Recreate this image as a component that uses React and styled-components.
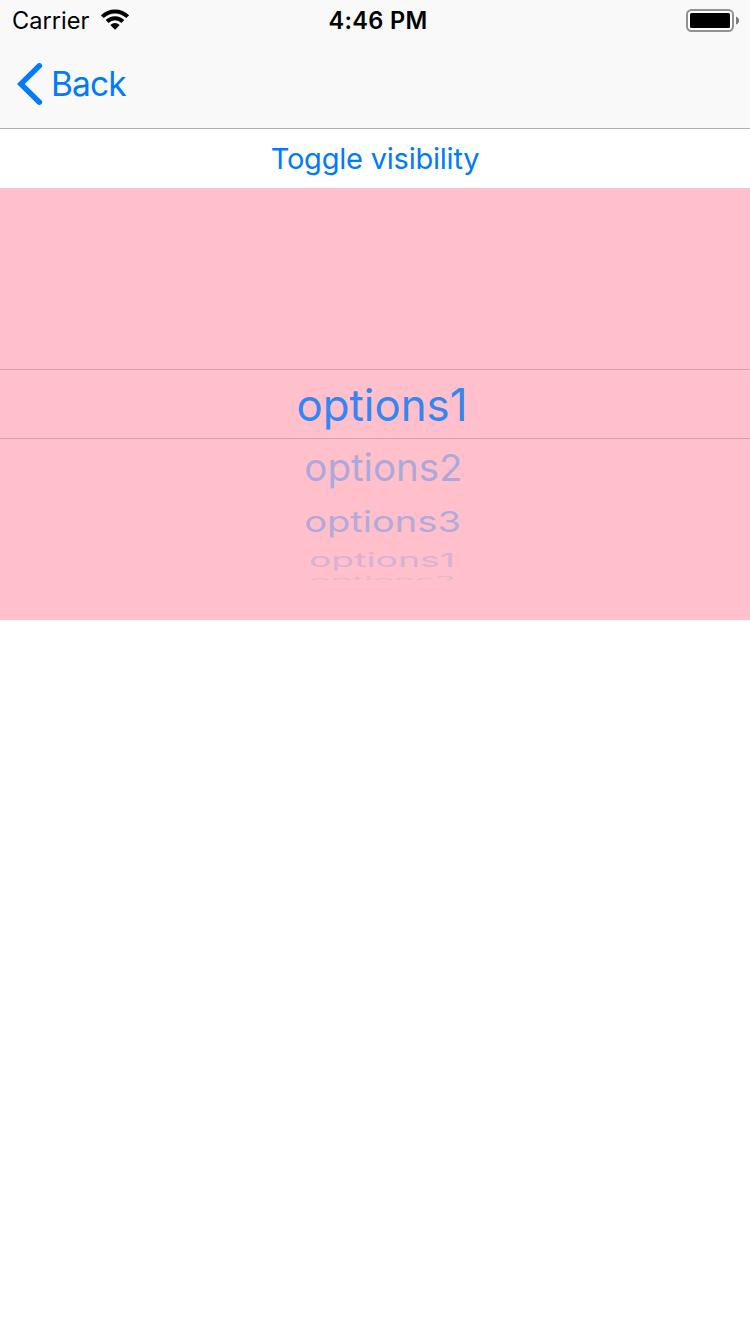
import React from "react";
import styled, { createGlobalStyle } from "styled-components";

const Global = createGlobalStyle`
  * { box-sizing: border-box; }
  body { margin: 0; background: #fff; font-family: Inter, "Liberation Sans", sans-serif; }
`;

const Screen = styled.main`
  display: flex;
  flex-direction: column;
  height: 1334px;
  overflow: hidden;
  background: #fff;
`;

const Header = styled.header`
  height: 129px;
  background: #f9f9f9;
  border-bottom: 1px solid #b0b0b0;
`;

const StatusBar = styled.div`
  display: grid;
  grid-template-columns: 1fr auto 1fr;
  align-items: center;
  height: 42px;
  padding: 0 11px 0 12px;
  color: #000;
`;

const Network = styled.div`
  display: flex;
  align-items: center;
  gap: 11px;
`;

const Wifi = styled.svg`
  margin-bottom: 3px;
`;

const Label = styled.span`
  display: block;
  flex: none;
  width: ${(p) => (p.$width ? `${p.$width}px` : "auto")};
  font-size: ${(p) => p.$size}px;
  font-weight: ${(p) => p.$weight || 400};
  letter-spacing: ${(p) => p.$spacing || 0}px;
  line-height: 40px;
  text-align: ${(p) => p.$align || "left"};
  white-space: nowrap;
`;

const Battery = styled.svg`
  justify-self: end;
`;

const BackButton = styled.button`
  display: flex;
  align-items: center;
  gap: 8px;
  height: 84px;
  padding: 0 0 0 17px;
  border: 0;
  background: none;
  color: #007aff;
  font-family: inherit;
`;

const ToggleButton = styled.button`
  display: flex;
  justify-content: center;
  align-items: center;
  height: 59px;
  padding: 0;
  border: 0;
  background: #fff;
  color: #007aff;
  font-family: inherit;
`;

const Picker = styled.section`
  display: flex;
  flex-direction: column;
  height: 432px;
  padding-top: 181px;
  background: #ffc0cb;
`;

const Option = styled.div`
  display: flex;
  flex: none;
  justify-content: center;
  align-items: ${(p) => (p.$clipped ? "flex-start" : "center")};
  height: ${(p) => p.$height}px;
  padding-top: ${(p) => p.$drop || 0}px;
  padding-left: ${(p) => p.$shift}px;
  overflow: ${(p) => (p.$clipped ? "hidden" : "visible")};
  border: solid #d59fa9;
  border-width: ${(p) => (p.$selected ? "1px 0" : 0)};
  color: ${(p) => p.$color};
`;

const OptionText = styled.span`
  font-size: 44px;
  line-height: 54px;
  white-space: nowrap;
  transform: scale(${(p) => p.$x}, ${(p) => p.$y});
  transform-origin: ${(p) => (p.$top ? "center top" : "center")};
`;

const options = [
  { text: "options1", height: 70, x: 0.995, y: 1.01, shift: 13, drop: 2, color: "#3486f0", selected: true },
  { text: "options2", height: 56, x: 0.875, y: 0.85, shift: 16, color: "#aca8dc" },
  { text: "options3", height: 52, x: 0.865, y: 0.66, shift: 15, color: "#b3aadb" },
  { text: "options1", height: 25, x: 0.85, y: 0.42, shift: 14, color: "#d6b2d4" },
  { text: "options2", height: 8, x: 0.81, y: 0.2, shift: 15, drop: 2, color: "#e6b6cf", clipped: true },
];

export default function App() {
  return (
    <Screen>
      <Global />
      <Header>
        <StatusBar>
          <Network>
            <Label $width={78} $size={23.6}>Carrier</Label>
            <Wifi width="28" height="21" viewBox="0 0 28 21">
              <g fill="none" stroke="#000" strokeWidth="4">
                <path d="M1.3 7.7C8.3 .6 19.7 .6 26.7 7.7" />
                <path d="M6.1 12.5C10.5 8.2 17.5 8.2 21.9 12.5" />
              </g>
              <path d="M9.3 16.1Q14 12 18.7 16.1L14 20.7Z" />
            </Wifi>
          </Network>
          <Label $width={104} $size={23.6} $weight={600} $spacing={0.3} $align="right">4:46 PM</Label>
          <Battery width="53" height="24" viewBox="0 0 53 24">
            <rect x="1" y="1" width="46" height="21" rx="4.5" fill="#fff" stroke="#929292" strokeWidth="2" />
            <rect x="4" y="4" width="40" height="15" rx="1.5" fill="#000" />
            <path d="M50 7.5Q53 8.5 53 11.5T50 15.5Z" fill="#7c7c7c" />
          </Battery>
        </StatusBar>
        <BackButton>
          <svg width="26" height="42" viewBox="0 0 26 42">
            <path d="M22.4 2.8L3.8 21L22.4 39.2" fill="none" stroke="#007aff" strokeWidth="5.4" strokeLinecap="round" />
          </svg>
          <Label $width={80} $size={33.5} $spacing={-0.9}>Back</Label>
        </BackButton>
      </Header>
      <ToggleButton>
        <Label $size={29} $spacing={-0.22}>Toggle visibility</Label>
      </ToggleButton>
      <Picker>
        {options.map((o, i) => (
          <Option key={i} $height={o.height} $shift={o.shift} $drop={o.drop} $color={o.color} $selected={o.selected} $clipped={o.clipped}>
            <OptionText $x={o.x} $y={o.y} $top={o.clipped}>{o.text}</OptionText>
          </Option>
        ))}
      </Picker>
    </Screen>
  );
}
